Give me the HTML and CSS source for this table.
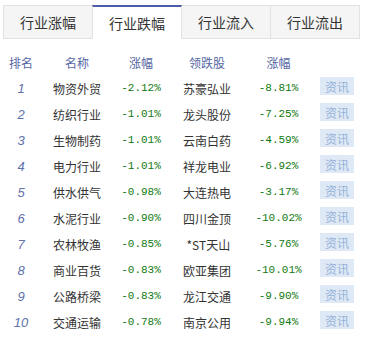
FILE: index.html
```html
<!DOCTYPE html>
<html lang="zh">
<head>
<meta charset="utf-8">
<title>行业跌幅</title>
<link rel="stylesheet" href="styles.css">
</head>
<body>
<div class="panel">
  <div class="tabs">
    <div class="tab">行业涨幅</div>
    <div class="tab active">行业跌幅</div>
    <div class="tab">行业流入</div>
    <div class="tab">行业流出</div>
  </div>
  <div class="table">
    <div class="row head">
      <span>排名</span><span>名称</span><span>涨幅</span><span>领跌股</span><span>涨幅</span><span></span>
    </div>
    <div class="row"><span class="rank">1</span><span class="name">物资外贸</span><span class="pct">-2.12%</span><span class="name">苏豪弘业</span><span class="pct">-8.81%</span><span><a class="btn">资讯</a></span></div>
    <div class="row"><span class="rank">2</span><span class="name">纺织行业</span><span class="pct">-1.01%</span><span class="name">龙头股份</span><span class="pct">-7.25%</span><span><a class="btn">资讯</a></span></div>
    <div class="row"><span class="rank">3</span><span class="name">生物制药</span><span class="pct">-1.01%</span><span class="name">云南白药</span><span class="pct">-4.59%</span><span><a class="btn">资讯</a></span></div>
    <div class="row"><span class="rank">4</span><span class="name">电力行业</span><span class="pct">-1.01%</span><span class="name">祥龙电业</span><span class="pct">-6.92%</span><span><a class="btn">资讯</a></span></div>
    <div class="row"><span class="rank">5</span><span class="name">供水供气</span><span class="pct">-0.98%</span><span class="name">大连热电</span><span class="pct">-3.17%</span><span><a class="btn">资讯</a></span></div>
    <div class="row"><span class="rank">6</span><span class="name">水泥行业</span><span class="pct">-0.90%</span><span class="name">四川金顶</span><span class="pct">-10.02%</span><span><a class="btn">资讯</a></span></div>
    <div class="row"><span class="rank">7</span><span class="name">农林牧渔</span><span class="pct">-0.85%</span><span class="name">&nbsp;*ST天山</span><span class="pct">-5.76%</span><span><a class="btn">资讯</a></span></div>
    <div class="row"><span class="rank">8</span><span class="name">商业百货</span><span class="pct">-0.83%</span><span class="name">欧亚集团</span><span class="pct">-10.01%</span><span><a class="btn">资讯</a></span></div>
    <div class="row"><span class="rank">9</span><span class="name">公路桥梁</span><span class="pct">-0.83%</span><span class="name">龙江交通</span><span class="pct">-9.90%</span><span><a class="btn">资讯</a></span></div>
    <div class="row"><span class="rank">10</span><span class="name">交通运输</span><span class="pct">-0.78%</span><span class="name">南京公用</span><span class="pct">-9.94%</span><span><a class="btn">资讯</a></span></div>
  </div>
</div>
</body>
</html>
```
FILE: styles.css
```css
html, body {
  margin: 0;
  padding: 0;
  background: #ffffff;
}
body {
  font-family: "Noto Sans CJK SC", "Liberation Sans", sans-serif;
  color: #333333;
}
.panel {
  padding: 5px 0 0 3px;
  width: 359px;
}
.tabs {
  display: flex;
  height: 34px;
}
.tab {
  flex: 0 0 90px;
  box-sizing: border-box;
  height: 34px;
  background: #f5f5f5;
  border: 1px solid #e2e2e2;
  margin-left: -1px;
  display: flex;
  align-items: center;
  justify-content: center;
  font-size: 14px;
  color: #333333;
}
.tab:first-child {
  margin-left: 0;
}
.tab.active {
  background: #ffffff;
  border-top: 2px solid #4a5da6;
  border-bottom-color: #ffffff;
  position: relative;
  z-index: 1;
}
.table {
  margin-top: 10px;
}
.row {
  display: grid;
  grid-template-columns: 36px 76px 52px 80px 63px 52px;
  height: 26px;
  align-items: center;
  justify-items: center;
  font-size: 12px;
}
.row.head {
  color: #5566a4;
}
.rank {
  font-family: "Liberation Sans", sans-serif;
  font-style: italic;
  font-size: 13px;
  color: #6070aa;
}
.name {
  color: #333333;
}
.pct {
  font-family: "Liberation Mono", monospace;
  font-size: 11px;
  color: #117a11;
}
.btn {
  display: flex;
  align-items: center;
  justify-content: center;
  width: 34px;
  height: 18px;
  background: #dfe9f5;
  color: #94b2d8;
  font-size: 12px;
  margin-top: -4px;
  margin-left: 2px;
}
```
